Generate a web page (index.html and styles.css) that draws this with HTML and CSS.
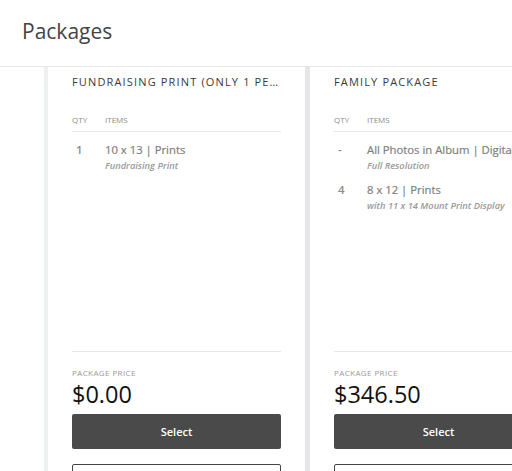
FILE: index.html
```html
<!DOCTYPE html>
<html>
<head>
<meta charset="utf-8">
<link rel="stylesheet" href="styles.css">
</head>
<body>
<header class="page-header">
  <h1 class="page-title">Packages</h1>
</header>
<main class="viewport">
  <div class="cards">
    <section class="card card-first">
      <h2 class="card-title">Fundraising Print (Only 1 Per Student)</h2>
      <div class="table-head">
        <span>QTY</span><span>ITEMS</span>
      </div>
      <div class="items">
        <div class="row">
          <div class="qty">1</div>
          <div class="desc">
            <div class="name">10 x 13 | Prints</div>
            <div class="sub">Fundraising Print</div>
          </div>
        </div>
      </div>
      <div class="footer">
        <div class="price-label">PACKAGE PRICE</div>
        <div class="price">$0.00</div>
        <button class="btn-select">Select</button>
        <button class="btn-outline"></button>
      </div>
    </section>
    <section class="card">
      <h2 class="card-title">Family Package</h2>
      <div class="table-head">
        <span>QTY</span><span>ITEMS</span>
      </div>
      <div class="items">
        <div class="row">
          <div class="qty">-</div>
          <div class="desc">
            <div class="name">All Photos in Album | Digitals</div>
            <div class="sub">Full Resolution</div>
          </div>
        </div>
        <div class="row">
          <div class="qty">4</div>
          <div class="desc">
            <div class="name">8 x 12 | Prints</div>
            <div class="sub">with 11 x 14 Mount Print Display</div>
          </div>
        </div>
      </div>
      <div class="footer">
        <div class="price-label">PACKAGE PRICE</div>
        <div class="price">$346.50</div>
        <button class="btn-select">Select</button>
        <button class="btn-outline"></button>
      </div>
    </section>
  </div>
</main>
</body>
</html>
```
FILE: styles.css
```css
html, body {
  margin: 0;
  padding: 0;
  background: #fff;
  overflow: hidden;
  width: 512px;
  height: 471px;
  font-family: "Open Sans", "Liberation Sans", sans-serif;
}

.page-header {
  height: 66px;
  border-bottom: 1px solid #e6e6e6;
  padding-left: 22px;
  box-sizing: content-box;
}

.page-title {
  margin: 0;
  font-size: 21px;
  font-weight: 400;
  line-height: 62px;
  color: #444;
}

.viewport {
  overflow: hidden;
  padding-left: 44px;
}

.cards {
  display: flex;
  width: 700px;
}

.card {
  flex: none;
  border-left: 5px solid #e4e6e9;
  padding: 7px 24px 0 24px;
  box-sizing: border-box;
  width: 262px;
}

.card-first {
  border-left: 4px solid #eef0f2;
  width: 261px;
}

.card-title {
  margin: 0;
  font-size: 11px;
  font-weight: 400;
  line-height: 16px;
  letter-spacing: 1.15px;
  text-transform: uppercase;
  color: #3a3a3a;
  white-space: nowrap;
  overflow: hidden;
  text-overflow: ellipsis;
}

.table-head {
  margin-top: 24px;
  display: grid;
  grid-template-columns: 33px 1fr;
  font-size: 8px;
  line-height: 12px;
  color: #8a8a8a;
  padding-bottom: 5px;
  border-bottom: 1px solid #e6e6e6;
}

.items {
  height: 219px;
  padding-top: 10px;
  box-sizing: border-box;
}

.row {
  display: grid;
  grid-template-columns: 33px 1fr;
  margin-bottom: 10px;
}

.qty {
  padding-left: 4px;
  font-size: 11.5px;
  line-height: 16px;
  font-weight: 600;
  color: #8c8c8c;
}

.name {
  font-size: 11.3px;
  line-height: 16px;
  font-weight: 400;
  color: #7e7e7e;
  white-space: nowrap;
  -webkit-text-stroke: 0.2px #7e7e7e;
}

.sub {
  margin-top: 2px;
  font-size: 9.3px;
  line-height: 12px;
  font-weight: 600;
  font-style: italic;
  color: #9a9a9a;
  white-space: nowrap;
}

.footer {
  border-top: 1px solid #e6e6e6;
  padding-top: 15px;
}

.price-label {
  font-size: 8px;
  line-height: 12px;
  color: #999;
  letter-spacing: 0.4px;
}

.price {
  margin-top: 2px;
  font-size: 23.5px;
  line-height: 26px;
  color: #111;
}

.btn-select {
  display: block;
  width: 100%;
  height: 35px;
  margin-top: 7px;
  border: none;
  border-radius: 2px;
  background: #4a4a4a;
  color: #fff;
  font-family: inherit;
  font-size: 11px;
  font-weight: 600;
}

.btn-outline {
  display: block;
  width: 100%;
  height: 35px;
  margin-top: 15px;
  border: 1px solid #444;
  border-radius: 2px;
  background: #fff;
}
```
